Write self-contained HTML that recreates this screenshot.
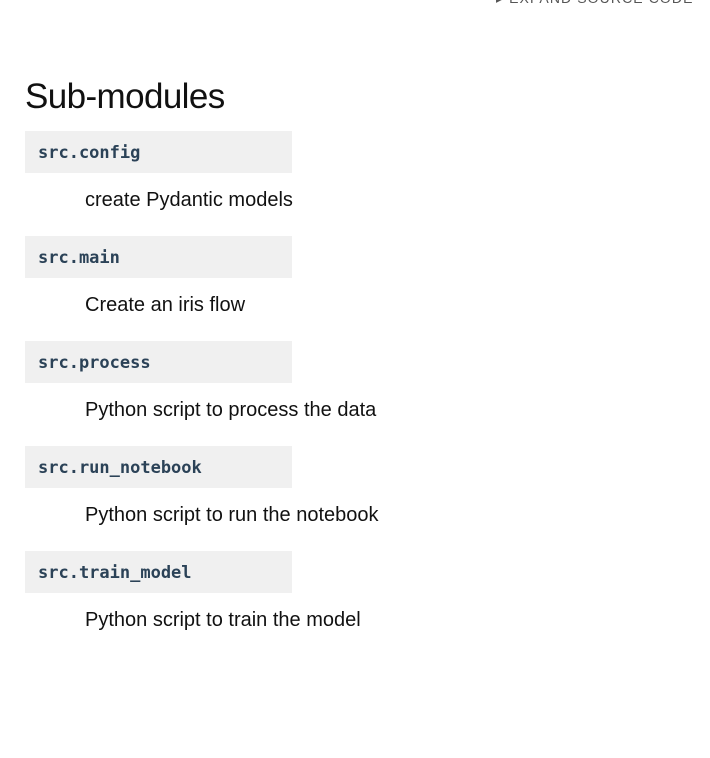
<!DOCTYPE html>
<html><head><style>
body{margin:0;width:710px;height:758px;background:#fff;font-family:"Liberation Sans",sans-serif;position:relative;overflow:hidden}
.top{position:absolute;left:496px;top:-10px;font-size:14px;color:#555;letter-spacing:1.1px}
h2{position:absolute;left:25px;top:77px;margin:0;font-size:35px;font-weight:normal;color:#111;letter-spacing:-0.6px}
.box{position:absolute;left:25px;width:267px;height:42px;background:#f0f0f0}
.box span{position:absolute;left:13px;top:12px;font-family:"DejaVu Sans Mono","Liberation Mono",monospace;font-weight:bold;font-size:17px;color:#2b4257}
.d{position:absolute;left:85px;font-size:20px;color:#111}
</style></head><body>
<div class="top">▸ EXPAND SOURCE CODE</div>
<h2>Sub-modules</h2>
<div class="box" style="top:131px"><span>src.config</span></div>
<div class="d" style="top:189px">create Pydantic models</div>
<div class="box" style="top:236px"><span>src.main</span></div>
<div class="d" style="top:294px">Create an iris flow</div>
<div class="box" style="top:341px"><span>src.process</span></div>
<div class="d" style="top:399px">Python script to process the data</div>
<div class="box" style="top:446px"><span>src.run_notebook</span></div>
<div class="d" style="top:504px">Python script to run the notebook</div>
<div class="box" style="top:551px"><span>src.train_model</span></div>
<div class="d" style="top:609px">Python script to train the model</div>
</body></html>
